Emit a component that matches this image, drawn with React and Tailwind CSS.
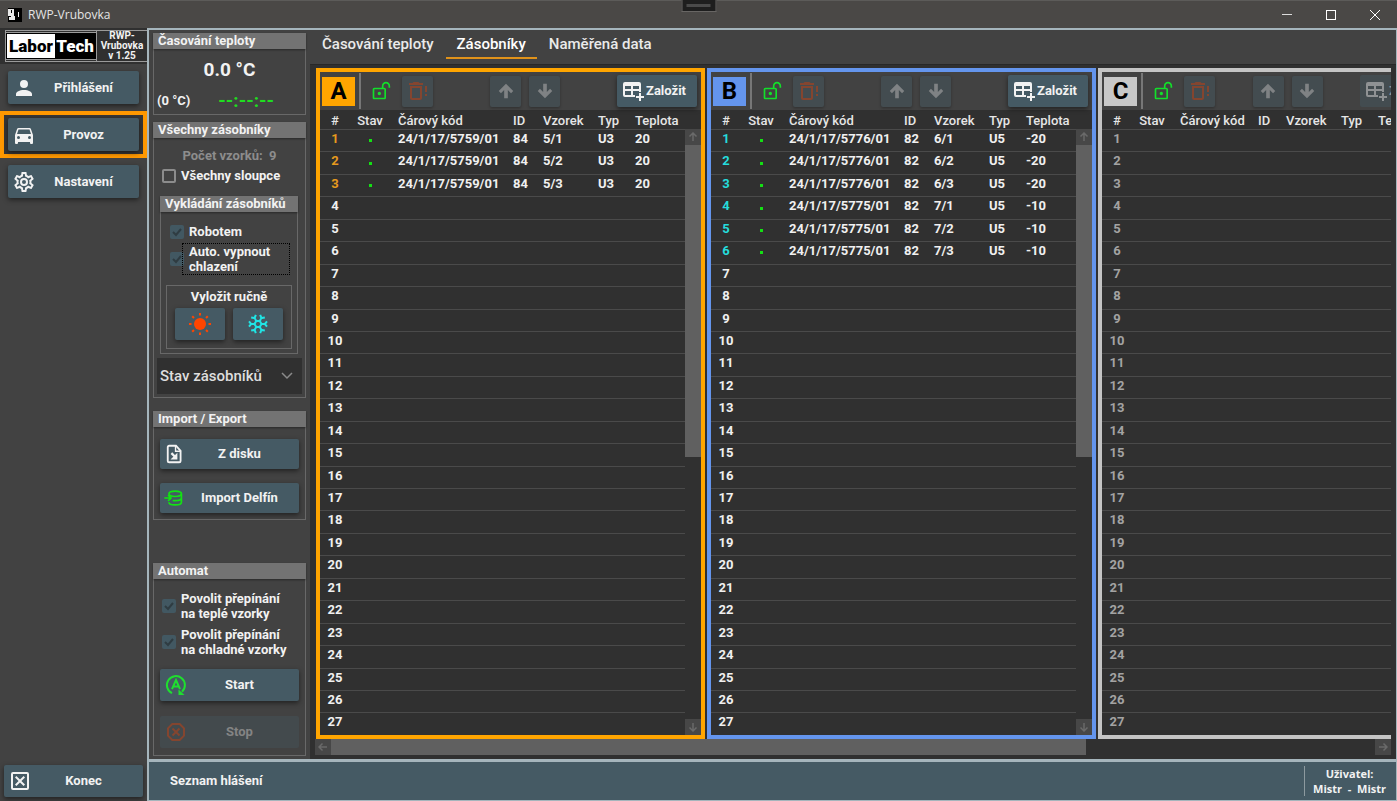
import clsx from "clsx";

const ICONS = {
  account:
    "M12,4A4,4 0 0,1 16,8A4,4 0 0,1 12,12A4,4 0 0,1 8,8A4,4 0 0,1 12,4M12,14C16.42,14 20,15.79 20,18V20H4V18C4,15.79 7.58,14 12,14Z",
  car: "M5,11L6.5,6.5H17.5L19,11M17.5,16A1.5,1.5 0 0,1 16,14.5A1.5,1.5 0 0,1 17.5,13A1.5,1.5 0 0,1 19,14.5A1.5,1.5 0 0,1 17.5,16M6.5,16A1.5,1.5 0 0,1 5,14.5A1.5,1.5 0 0,1 6.5,13A1.5,1.5 0 0,1 8,14.5A1.5,1.5 0 0,1 6.5,16M18.92,6C18.72,5.42 18.16,5 17.5,5H6.5C5.84,5 5.28,5.42 5.08,6L3,12V20A1,1 0 0,0 4,21H5A1,1 0 0,0 6,20V19H18V20A1,1 0 0,0 19,21H20A1,1 0 0,0 21,20V12L18.92,6Z",
  cog: "M12,8A4,4 0 0,1 16,12A4,4 0 0,1 12,16A4,4 0 0,1 8,12A4,4 0 0,1 12,8M12,10A2,2 0 0,0 10,12A2,2 0 0,0 12,14A2,2 0 0,0 14,12A2,2 0 0,0 12,10M10,22C9.75,22 9.54,21.82 9.5,21.58L9.13,18.93C8.5,18.68 7.96,18.34 7.44,17.94L4.95,18.95C4.73,19.03 4.46,18.95 4.34,18.73L2.34,15.27C2.21,15.05 2.27,14.78 2.46,14.63L4.57,12.97L4.5,12L4.57,11L2.46,9.37C2.27,9.22 2.21,8.95 2.34,8.73L4.34,5.27C4.46,5.05 4.73,4.96 4.95,5.05L7.44,6.05C7.96,5.66 8.5,5.32 9.13,5.07L9.5,2.42C9.54,2.18 9.75,2 10,2H14C14.25,2 14.46,2.18 14.5,2.42L14.87,5.07C15.5,5.32 16.04,5.66 16.56,6.05L19.05,5.05C19.27,4.96 19.54,5.05 19.66,5.27L21.66,8.73C21.79,8.95 21.73,9.22 21.54,9.37L19.43,11L19.5,12L19.43,13L21.54,14.63C21.73,14.78 21.79,15.05 21.66,15.27L19.66,18.73C19.54,18.95 19.27,19.04 19.05,18.95L16.56,17.95C16.04,18.34 15.5,18.68 14.87,18.93L14.5,21.58C14.46,21.82 14.25,22 14,22H10M11.25,4L10.88,6.61C9.68,6.86 8.62,7.5 7.85,8.39L5.44,7.35L4.69,8.65L6.8,10.2C6.4,11.37 6.4,12.64 6.8,13.8L4.68,15.36L5.43,16.66L7.86,15.62C8.63,16.5 9.68,17.14 10.87,17.38L11.24,20H12.76L13.13,17.39C14.32,17.14 15.37,16.5 16.14,15.62L18.57,16.66L19.32,15.36L17.2,13.81C17.6,12.64 17.6,11.37 17.2,10.2L19.31,8.65L18.56,7.35L16.15,8.39C15.38,7.5 14.32,6.86 13.12,6.62L12.75,4H11.25Z",
  closeBox:
    "M19,19H5V5H19M19,3H5A2,2 0 0,0 3,5V19A2,2 0 0,0 5,21H19A2,2 0 0,0 21,19V5A2,2 0 0,0 19,3M13.41,12L17,15.59L15.59,17L12,13.41L8.41,17L7,15.59L10.59,12L7,8.41L8.41,7L12,10.59L15.59,7L17,8.41L13.41,12Z",
  unlock:
    "M18 1C15.24 1 13 3.24 13 6V8H4C2.9 8 2 8.89 2 10V20C2 21.11 2.9 22 4 22H16C17.11 22 18 21.11 18 20V10C18 8.9 17.11 8 16 8H15V6C15 4.34 16.34 3 18 3C19.66 3 21 4.34 21 6V8H23V6C23 3.24 20.76 1 18 1M10 13C11.1 13 12 13.89 12 15C12 16.11 11.11 17 10 17C8.9 17 8 16.11 8 15C8 13.9 8.9 13 10 13M16 10V20H4V10H16Z",
  trash:
    "M17 4V6H3V4H6.5L7.5 3H12.5L13.5 4H17M4 19V7H16V19C16 20.1 15.1 21 14 21H6C4.9 21 4 20.1 4 19M6 19H14V9H6V19M19 7H21V13H19V7M19 15H21V17H19V15Z",
  arrowUp: "M14,20H10V11L6.5,14.5L4.08,12.08L12,4.16L19.92,12.08L17.5,14.5L14,11V20Z",
  arrowDown: "M10,4H14V13L17.5,9.5L19.92,11.92L12,19.84L4.08,11.92L6.5,9.5L10,13V4Z",
  tablePlus:
    "M4 3H18A2 2 0 0 1 20 5V13H18V12H12V16H14V18H4A2 2 0 0 1 2 16V5A2 2 0 0 1 4 3M4 7V10H10V7H4M12 7V10H18V7H12M4 12V16H10V12H4M18 14H20V17H23V19H20V22H18V19H15V17H18Z",
};

function Icon({ name, className }) {
  return (
    <svg viewBox="0 0 24 24" fill="currentColor" fillRule="evenodd" className={clsx("shrink-0", className)} aria-hidden="true">
      <path d={ICONS[name]} />
    </svg>
  );
}

function SunIcon() {
  return (
    <svg viewBox="0 0 24 24" className="size-6 text-[#ff4500]" fill="currentColor" aria-hidden="true">
      <circle cx="12" cy="12" r="6" />
      {[0, 45, 90, 135, 180, 225, 270, 315].map((a) => (
        <path key={a} d="M11 1h2v2.500h-2z" transform={`rotate(${a} 12 12)`} />
      ))}
    </svg>
  );
}

function SnowIcon() {
  return (
    <svg viewBox="0 0 24 24" className="size-6 text-[#20e5e5]" fill="none" stroke="currentColor" strokeWidth="2" aria-hidden="true">
      <path d="M10.300 9h3.400l1.800 3-1.800 3h-3.400l-1.800-3z" />
      {[30, 90, 150, 210, 270, 330].map((a) => (
        <path key={a} d="M12 8.500V4.500M9.300 3L12 5.200 14.700 3" transform={`rotate(${a} 12 12)`} />
      ))}
    </svg>
  );
}

function FileImportIcon() {
  return (
    <svg viewBox="2 0 24 24" className="size-[22px] shrink-0" fill="none" stroke="currentColor" strokeWidth="2" aria-hidden="true">
      <path d="M14 3H6.500A1.500 1.500 0 0 0 5 4.500v15A1.500 1.500 0 0 0 6.500 21h11a1.500 1.500 0 0 0 1.500-1.500V8.500z" />
      <path d="M13.500 3v6h6" strokeWidth="1.500" />
      <path d="M9 11l4.500 4.500" strokeWidth="2.500" />
      <path d="M15.500 10.500v7.500H8z" fill="currentColor" stroke="none" />
    </svg>
  );
}

function DatabaseImportIcon() {
  return (
    <svg viewBox="3 0 24 24" className="size-5 shrink-0 overflow-visible text-[#12e412]" fill="none" stroke="currentColor" strokeWidth="2" aria-hidden="true">
      <ellipse cx="14" cy="7" rx="7.500" ry="3.200" />
      <path d="M21.500 7v10c0 1.800-3.400 3.200-7.500 3.200S6.500 18.800 6.500 17M21.500 12c0 1.800-3.400 3.200-7.500 3.200-1 0-2 0-3-.2" />
      <path d="M1 12h8M5.500 8.500L9 12l-3.500 3.500" />
    </svg>
  );
}

function AutoStartIcon() {
  return (
    <svg viewBox="0 0 24 24" className="size-6 shrink-0 text-[#1fdf2f]" fill="none" stroke="currentColor" strokeWidth="2" aria-hidden="true">
      <path d="M8 20.200A9 9 0 1 1 18 18.700" />
      <path d="M20.500 22h-6v-5.500z" fill="currentColor" stroke="none" />
      <path d="M8 16.200L12 7l4 9.200M9.500 13.500h5" />
    </svg>
  );
}

function StopIcon() {
  return (
    <svg viewBox="0 0 24 24" className="size-6 shrink-0 text-[#84452f]" fill="none" stroke="currentColor" strokeWidth="2" aria-hidden="true">
      <path d="M8.300 4h7.400L20 8.300v7.400L15.700 20H8.300L4 15.700V8.300z" />
      <path d="M8.500 8.500l7 7M15.500 8.500l-7 7" />
    </svg>
  );
}

function ActionButton({ icon, label, className, disabled }) {
  return (
    <button
      type="button"
      disabled={disabled}
      className={clsx(
        "flex w-full items-center rounded-xs px-1.5",
        disabled ? "bg-[#434a4d] text-[#848484]" : "bg-[#455a64] text-[#f2f2f2] shadow-[0_2px_5px_rgba(0,0,0,0.5)]",
        className
      )}
    >
      <span className="flex w-5 shrink-0 items-center justify-center">{icon}</span>
      <span className="flex-1 text-center">{label}</span>
    </button>
  );
}

const NAV = [
  { icon: "account", label: "Přihlášení" },
  { icon: "car", label: "Provoz", active: true },
  { icon: "cog", label: "Nastavení" },
];

function TitleBar() {
  return (
    <header className="flex h-7 shrink-0 items-center border-t border-[#5c5b59] bg-[#4a4846] text-white">
      <svg viewBox="0 0 14 14" className="ml-2 size-3.5" aria-hidden="true">
        <path fill="#000" d="M0 0h14v14H0z" />
        <path fill="#e8e8e8" d="M0 1h6v7h1v4H1V9h2V8H0zM10 4h1v5h-1z" />
        <path fill="#000" d="M3 2h1v3H3z" />
      </svg>
      <h1 className="ml-1.5 flex-1 font-['Open_Sans',sans-serif] text-[12px] font-normal text-[#e4e4e4]">RWP-Vrubovka</h1>
      <div className="flex">
        <button type="button" aria-label="Minimalizovat" className="flex h-7 w-11 items-center justify-center">
          <span className="h-px w-2.5 bg-[#dcdcdc]" />
        </button>
        <button type="button" aria-label="Maximalizovat" className="flex h-7 w-11 items-center justify-center">
          <span className="size-2.5 border border-white" />
        </button>
        <button type="button" aria-label="Zavřít" className="flex h-7 w-11 items-center justify-center">
          <svg viewBox="0 0 10 10" className="size-2.5" stroke="#fff" aria-hidden="true">
            <path d="M0 0l10 10M10 0L0 10" />
          </svg>
        </button>
      </div>
    </header>
  );
}

function Sidebar() {
  return (
    <aside className="flex w-[147px] shrink-0 flex-col bg-[#424242]">
      <div className="flex h-9 items-center bg-[#303030] pl-[5px]">
        <div className="flex h-8 w-[92px] items-center border border-[#9a9a9a]">
          <div className="flex h-7 flex-1 items-center justify-center border-y border-[#9a9a9a] bg-black p-px text-[17px] leading-none font-black">
            <span className="flex h-full w-12 items-center justify-center bg-white text-black">Labor</span>
            <span className="flex h-full flex-1 items-center justify-center text-white">Tech</span>
          </div>
        </div>
        <p className="flex h-8 flex-1 flex-col justify-center border-y border-[#9a9a9a] text-center text-[10px] leading-[10px]">
          <span>RWP-</span>
          <span>Vrubovka</span>
          <span>v 1.25</span>
        </p>
      </div>
      <nav>
        {NAV.map((item) => (
          <div key={item.label} className={clsx("border-4 px-1 py-[3px]", item.active ? "border-[#ff9800] bg-[#363636]" : "border-transparent")}>
            <ActionButton icon={<Icon name={item.icon} className="size-6" />} label={item.label} className="h-[33px]" />
          </div>
        ))}
      </nav>
      <div className="mt-auto px-1 pb-1">
        <ActionButton icon={<Icon name="closeBox" className="size-6" />} label="Konec" className="h-8" />
      </div>
    </aside>
  );
}

function Group({ title, className, children }) {
  return (
    <section className="shrink-0 border border-t-0 border-[#686868]">
      <h2 className="-mx-px h-4 bg-[#737373] px-[5px] leading-4 whitespace-nowrap shadow-[0_1px_2px_rgba(0,0,0,0.4)]">{title}</h2>
      <div className={className}>{children}</div>
    </section>
  );
}

function CheckBox({ id, label, checked, disabled, focused }) {
  return (
    <div className="flex items-center">
      <span className="grid shrink-0">
        <input
          id={id}
          type="checkbox"
          defaultChecked={checked}
          disabled={disabled}
          className="size-3.5 appearance-none rounded-xs border-2 border-[#8c8c8c] [grid-area:1/1] checked:border-[#425862] checked:bg-[#425862]"
        />
        {checked && (
          <svg viewBox="0 0 14 14" className="pointer-events-none size-3.5 [grid-area:1/1]" fill="none" stroke="#2f3c42" strokeWidth="2" aria-hidden="true">
            <path d="M3 7l3 3 5-6" />
          </svg>
        )}
      </span>
      <label
        htmlFor={id}
        className={clsx("flex-1 leading-[15px] whitespace-pre-line", focused ? "-ml-0.5 border border-dotted border-black pl-1.5" : "pl-[5px]")}
      >
        {label}
      </label>
    </div>
  );
}

function ControlPanel() {
  return (
    <div className="flex w-[161px] shrink-0 flex-col bg-[#424242] px-1 py-[3px]">
      <Group title="Časování teploty" className="h-[65px] pt-2">
        <p className="text-center text-[19px] leading-[26px]">0.0 °C</p>
        <div className="mt-2 flex items-center justify-between pr-[31px] pl-[3px] leading-5">
          <span>(0 °C)</span>
          <span className="text-[19px] text-[#20dc20]">--:--:--</span>
        </div>
      </Group>
      <div className="h-[7px] shrink-0" />
      <Group title="Všechny zásobníky" className="px-[3px] pt-2.5 pb-[3px]">
        <p className="text-center leading-4 whitespace-pre text-[#8d8d8d]">{"Počet vzorků:  9"}</p>
        <div className="mt-1 pl-[5px]">
          <CheckBox id="all-columns" label="Všechny sloupce" />
        </div>
        <div className="mt-[13px] pr-1 pl-[3px]">
          <Group title="Vykládání zásobníků" className="px-[5px] pt-3 pb-1">
            <div className="pr-0.5 pl-1">
              <CheckBox id="robot" label="Robotem" checked disabled />
              <div className="mt-1">
                <CheckBox id="auto-off" label={"Auto. vypnout\nchlazení"} checked disabled focused />
              </div>
            </div>
            <div className="mt-2.5 border border-[#686868] px-2 pt-[3px] pb-2">
              <h3 className="text-center leading-4">Vyložit ručně</h3>
              <div className="mt-[3px] flex gap-2">
                <button type="button" aria-label="Vyložit teplé" className="flex h-8 flex-1 items-center justify-center rounded-xs bg-[#455a64] shadow-[0_2px_5px_rgba(0,0,0,0.5)]">
                  <SunIcon />
                </button>
                <button type="button" aria-label="Vyložit chladné" className="flex h-8 flex-1 items-center justify-center rounded-xs bg-[#455a64] shadow-[0_2px_5px_rgba(0,0,0,0.5)]">
                  <SnowIcon />
                </button>
              </div>
            </div>
          </Group>
        </div>
        <button type="button" className="mt-1 flex h-9 w-full items-center justify-between bg-[#303030] pr-2 pl-[3px] text-[15px] font-medium text-[#dedede]">
          Stav zásobníků
          <svg viewBox="0 0 14 14" className="size-3.5" fill="none" stroke="#8a8a8a" strokeWidth="1.500" aria-hidden="true">
            <path d="M2 4l5 5 5-5" />
          </svg>
        </button>
      </Group>
      <div className="h-[13px] shrink-0" />
      <Group title="Import / Export" className="flex flex-col gap-3.5 px-1.5 pt-3 pb-1.5">
        <ActionButton icon={<FileImportIcon />} label="Z disku" className="h-[30px]" />
        <ActionButton icon={<DatabaseImportIcon />} label="Import Delfín" className="h-[30px]" />
      </Group>
      <div className="min-h-2 flex-1" />
      <Group title="Automat" className="flex flex-col px-1.5 pt-3 pb-[7px]">
        <div className="flex flex-col gap-1.5 pl-0.5">
          <CheckBox id="switch-warm" label={"Povolit přepínání\nna teplé vzorky"} checked disabled />
          <CheckBox id="switch-cold" label={"Povolit přepínání\nna chladné vzorky"} checked disabled />
        </div>
        <ActionButton icon={<AutoStartIcon />} label="Start" className="mt-3 h-8" />
        <ActionButton icon={<StopIcon />} label="Stop" className="mt-[15px] h-8" disabled />
      </Group>
    </div>
  );
}

const COLUMNS = ["#", "Stav", "Čárový kód", "ID", "Vzorek", "Typ", "Teplota"];

const RACKS = [
  {
    name: "A",
    tone: { border: "border-[#ffa500]", badge: "bg-[#ffa500]", used: "text-[#e69a1e]" },
    samples: [
      ["24/1/17/5759/01", "84", "5/1", "U3", "20"],
      ["24/1/17/5759/01", "84", "5/2", "U3", "20"],
      ["24/1/17/5759/01", "84", "5/3", "U3", "20"],
    ],
  },
  {
    name: "B",
    tone: { border: "border-[#6495ed]", badge: "bg-[#6495ed]", used: "text-[#25dcdc]" },
    samples: [
      ["24/1/17/5776/01", "82", "6/1", "U5", "-20"],
      ["24/1/17/5776/01", "82", "6/2", "U5", "-20"],
      ["24/1/17/5776/01", "82", "6/3", "U5", "-20"],
      ["24/1/17/5775/01", "82", "7/1", "U5", "-10"],
      ["24/1/17/5775/01", "82", "7/2", "U5", "-10"],
      ["24/1/17/5775/01", "82", "7/3", "U5", "-10"],
    ],
  },
  {
    name: "C",
    tone: { border: "border-[#c4c4c4]", badge: "bg-[#c8c8c8]", used: "" },
    samples: [],
  },
];

const SLOTS = Array.from({ length: 27 }, (_, i) => i);

function ToolButton({ icon, label, className, iconSize = "size-[22px]", disabled }) {
  return (
    <button
      type="button"
      aria-label={label}
      disabled={disabled}
      className={clsx("flex size-[31px] items-center justify-center rounded-xs", disabled && "bg-[#434c50] shadow-[0_1px_3px_rgba(0,0,0,0.3)]", className)}
    >
      <Icon name={icon} className={iconSize} />
    </button>
  );
}

function ScrollArrow({ label, d }) {
  return (
    <button type="button" aria-label={label} className="flex size-4 shrink-0 items-center justify-center bg-[#474747]">
      <svg viewBox="0 0 10 10" className="size-2.5" fill="none" stroke="#6a6a6a" strokeWidth="1.500" aria-hidden="true">
        <path d={d} />
      </svg>
    </button>
  );
}

function Rack({ rack }) {
  const empty = rack.samples.length === 0;
  return (
    <section className={clsx("flex shrink-0 flex-col border-4", rack.tone.border, empty ? "w-[350px]" : "w-[389px]")}>
      <div className="flex h-[38px] shrink-0 items-center justify-between bg-[#424242] pr-1 pl-0.5">
        <div className="flex items-center">
          <h2 className={clsx("flex h-[29px] w-[33px] items-center justify-center text-[24px] text-black", rack.tone.badge)}>{rack.name}</h2>
          <span className="ml-1 h-9 w-0.5 bg-[#777]" />
          <ToolButton icon="unlock" label="Odemknout" className="ml-1 text-[#12e02a]" iconSize="size-5" />
          <ToolButton icon="trash" label="Smazat" className="ml-1.5 text-[#84452f]" iconSize="size-6" disabled />
        </div>
        <div className="flex gap-2 text-[#7f8284]">
          <ToolButton icon="arrowUp" label="Nahoru" disabled />
          <ToolButton icon="arrowDown" label="Dolů" disabled />
        </div>
        <button
          type="button"
          disabled={empty}
          className={clsx(
            "flex h-8 w-20 items-center gap-px rounded-xs pl-1",
            empty ? "bg-[#434c50] text-[#8f9294]" : "bg-[#455a64] text-[#f2f2f2] shadow-[0_2px_5px_rgba(0,0,0,0.5)]"
          )}
        >
          <Icon name="tablePlus" className="size-6" />
          Založit
        </button>
      </div>
      <div className="flex min-h-0 flex-1">
        <table className="h-full flex-1 table-fixed text-left">
          <colgroup>
            <col className="w-[30px]" />
            <col className="w-10" />
            <col className={empty ? "w-[78px]" : "w-[115px]"} />
            <col className={empty ? "w-7" : "w-[30px]"} />
            <col className="w-[55px]" />
            <col className="w-[37px]" />
            <col />
          </colgroup>
          <thead>
            <tr className="h-[19px] leading-4 whitespace-nowrap text-[#e6e6e6]">
              {COLUMNS.map((name, i) => (
                <th key={name} className={clsx("pt-[3px] font-medium", i < 2 ? "text-center" : "pl-2")}>
                  {name}
                </th>
              ))}
            </tr>
          </thead>
          <tbody className="leading-[18px]">
            {SLOTS.map((slot) => {
              const sample = rack.samples[slot];
              return (
                <tr key={slot} className="border-t border-[#4a4a4a] text-[#f0f0f0]">
                  <td className={clsx("p-0 text-center align-top", sample && rack.tone.used, empty && "text-[#a3a3a3]")}>{slot + 1}</td>
                  <td className="p-0">{sample && <span className="mx-auto block size-[3px] bg-[#14e014]" />}</td>
                  {sample ? (
                    sample.map((value, i) => (
                      <td key={i} className="p-0 pl-2 align-top">
                        {value}
                      </td>
                    ))
                  ) : (
                    <td colSpan={5} className="p-0" />
                  )}
                </tr>
              );
            })}
          </tbody>
        </table>
        {!empty && (
          <div className="mt-[19px] flex w-4 shrink-0 flex-col">
            <ScrollArrow label="Posunout nahoru" d="M5 9V1M1.500 4.500L5 1l3.500 3.500" />
            <div className="flex-1">
              <div className="h-[54.4%] bg-[#606060]" />
            </div>
            <ScrollArrow label="Posunout dolů" d="M5 1v8M1.500 5.500L5 9l3.500-3.500" />
          </div>
        )}
      </div>
    </section>
  );
}

function Workspace() {
  return (
    <div className="flex min-w-0 flex-1 flex-col bg-[#303030]">
      <div role="tablist" className="flex h-[35px] shrink-0 border-b border-[#282828] bg-[#424242] text-[15px] font-medium">
        <button type="button" role="tab" aria-selected="false" className="mb-[5px] px-3 text-[#eaeaea]">
          Časování teploty
        </button>
        <button type="button" role="tab" aria-selected="true" className="mb-[5px] border-b-2 border-[#e0921a] px-[11px] pt-0.5 text-white">
          Zásobníky
        </button>
        <button type="button" role="tab" aria-selected="false" className="mb-[5px] px-3 text-[#eaeaea]">
          Naměřená data
        </button>
      </div>
      <div className="mt-[3px] mr-[5px] ml-[5px] flex min-h-0 flex-1 gap-0.5 overflow-hidden pl-px">
        {RACKS.map((rack) => (
          <Rack key={rack.name} rack={rack} />
        ))}
      </div>
      <div className="mr-[5px] mb-1 ml-[5px] flex h-4 shrink-0">
        <ScrollArrow label="Posunout vlevo" d="M9 5H1M4.500 1.500L1 5l3.500 3.500" />
        <div className="flex-1">
          <div className="h-4 w-[72.3%] bg-[#606060]" />
        </div>
        <ScrollArrow label="Posunout vpravo" d="M1 5h8M5.500 1.500L9 5l-3.500 3.500" />
      </div>
    </div>
  );
}

export default function App() {
  return (
    <div className="relative flex h-screen flex-col overflow-hidden bg-[#424242] font-['Roboto',sans-serif] text-[13px] font-bold text-[#f2f2f2]">
      <TitleBar />
      <div className="absolute top-0 left-1/2 flex h-3 w-[35px] -translate-x-1/2 items-center justify-center border border-t-0 border-[#686664] bg-[#1e1e1e]">
        <span className="h-[3px] w-6 bg-[#4a4a4a]" />
      </div>
      <div className="flex min-h-0 flex-1">
        <Sidebar />
        <main className="flex min-w-0 flex-1 flex-col border-t-2 border-r border-l-2 border-[#a5b5bc]">
          <div className="flex min-h-0 flex-1">
            <ControlPanel />
            <Workspace />
          </div>
          <footer className="flex h-[42px] shrink-0 items-center justify-between border-t-3 border-b border-[#a5b5bc] bg-[#455a64] pr-2.5 pl-[21px]">
            <button type="button">Seznam hlášení</button>
            <p className="flex h-[30px] flex-col justify-center border-l border-[#8d9a9f] pl-2 text-center font-['Open_Sans',sans-serif] text-[11px] leading-[15px] whitespace-pre">
              <span>Uživatel:</span>
              <span>{"Mistr  -  Mistr"}</span>
            </p>
          </footer>
        </main>
      </div>
    </div>
  );
}
